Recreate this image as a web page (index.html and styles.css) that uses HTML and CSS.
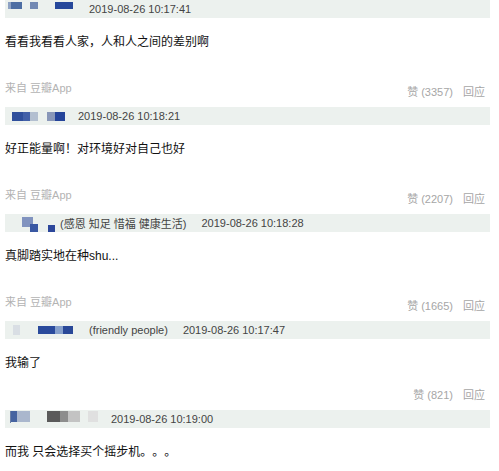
FILE: index.html
```html
<!DOCTYPE html>
<html lang="zh-CN">
<head>
  <meta charset="UTF-8" />
  <meta name="viewport" content="width=device-width, initial-scale=1.0" />
  <title>评论</title>
  <link rel="stylesheet" href="styles.css">
</head>
<body>

  <div class="comments">

    <div class="comment">
      <div class="comment-head">
        <svg class="mosaic" width="84" height="18">
          <rect x="3" y="2" width="14" height="7" fill="#4d6ea3"/>
          <rect x="3" y="2" width="3" height="7" fill="#8ea2c4"/>
          <rect x="25" y="2" width="8" height="7" fill="#7289b3"/>
          <rect x="50" y="2" width="18" height="7" fill="#26489b"/>
        </svg>
        <span class="time">2019-08-26 10:17:41</span>
      </div>
      <p class="comment-text">看看我看看人家，人和人之间的差别啊</p>
      <div class="comment-foot">
        <span class="source">来自 豆瓣App</span>
        <span class="actions"><span>赞 (3357)</span><span>回应</span></span>
      </div>
    </div>

    <div class="comment">
      <div class="comment-head">
        <svg class="mosaic" width="73" height="18">
          <rect x="7" y="5" width="11" height="9" fill="#2f4f9c"/>
          <rect x="18" y="5" width="7" height="9" fill="#4260a8"/>
          <rect x="25" y="5" width="8" height="9" fill="#b3bfd0"/>
          <rect x="42" y="5" width="8" height="9" fill="#8997b9"/>
          <rect x="50" y="5" width="10" height="9" fill="#25449a"/>
        </svg>
        <span class="time">2019-08-26 10:18:21</span>
      </div>
      <p class="comment-text">好正能量啊！对环境好对自己也好</p>
      <div class="comment-foot">
        <span class="source">来自 豆瓣App</span>
        <span class="actions"><span>赞 (2207)</span><span>回应</span></span>
      </div>
    </div>

    <div class="comment">
      <div class="comment-head">
        <svg class="mosaic" width="55" height="18">
          <rect x="17" y="3" width="11" height="10" fill="#8193bf"/>
          <rect x="25" y="10" width="8" height="8" fill="#3a58a3"/>
          <rect x="43" y="11" width="7" height="7" fill="#2c479b"/>
        </svg>
        <span class="sig">(感恩 知足 惜福 健康生活)</span>
        <span class="time">2019-08-26 10:18:28</span>
      </div>
      <p class="comment-text">真脚踏实地在种shu...</p>
      <div class="comment-foot">
        <span class="source">来自 豆瓣App</span>
        <span class="actions"><span>赞 (1665)</span><span>回应</span></span>
      </div>
    </div>

    <div class="comment">
      <div class="comment-head">
        <svg class="mosaic" width="84" height="18">
          <rect x="8" y="4" width="7" height="10" fill="#d9dee4"/>
          <rect x="33" y="5" width="17" height="8" fill="#2a4a9c"/>
          <rect x="50" y="5" width="8" height="8" fill="#86a0cc"/>
          <rect x="58" y="5" width="10" height="8" fill="#294898"/>
        </svg>
        <span class="sig">(friendly people)</span>
        <span class="time">2019-08-26 10:17:47</span>
      </div>
      <p class="comment-text">我输了</p>
      <div class="comment-foot no-source">
        <span class="actions"><span>赞 (821)</span><span>回应</span></span>
      </div>
    </div>

    <div class="comment">
      <div class="comment-head">
        <svg class="mosaic" width="106" height="18">
          <rect x="5" y="1" width="1" height="12" fill="#6b7fa6"/>
          <rect x="6" y="1" width="6" height="11" fill="#4563a0"/>
          <rect x="12" y="1" width="13" height="11" fill="#aab7cd"/>
          <rect x="42" y="1" width="13" height="11" fill="#5a5a5a"/>
          <rect x="55" y="1" width="8" height="11" fill="#8d8d8d"/>
          <rect x="63" y="1" width="12" height="11" fill="#c3c3c3"/>
          <rect x="83" y="1" width="10" height="11" fill="#e0e0e0"/>
        </svg>
        <span class="time">2019-08-26 10:19:00</span>
      </div>
      <p class="comment-text">而我 只会选择买个摇步机。。。</p>
    </div>

  </div>

</body>
</html>
```

FILE: styles.css
```css
/* Geral */
body {
  margin: 0;
  background: #fff;
  font-family: "Liberation Sans", "Noto Sans CJK SC", sans-serif;
  text-spacing-trim: space-all;
}

.comments {
  padding: 0 9px 0 5px;
}

/* Cabeçalho do comentário */
.comment-head {
  display: flex;
  align-items: center;
  height: 18px;
  background: #ecf1ee;
}

.mosaic {
  display: block;
  flex-shrink: 0;
}

.time, .sig {
  font-size: 11px;
  color: #444;
  white-space: nowrap;
}

.sig {
  margin-right: 15px;
}

/* Texto */
.comment-text {
  margin: 15px 0 0;
  font-size: 12px;
  line-height: 18px;
  color: #111;
}

/* Rodapé */
.comment-foot {
  display: flex;
  justify-content: space-between;
  align-items: flex-start;
  height: 20px;
  margin-top: 29px;
  padding-bottom: 7px;
  font-size: 11px;
}

.comment-foot.no-source {
  justify-content: flex-end;
  margin-top: 11px;
}

.source {
  line-height: 16px;
  color: #b3b3b3;
}

.actions {
  display: flex;
  gap: 10px;
  margin-top: 4px;
  padding-right: 5px;
  line-height: 16px;
  color: #a6a6a6;
}
```
